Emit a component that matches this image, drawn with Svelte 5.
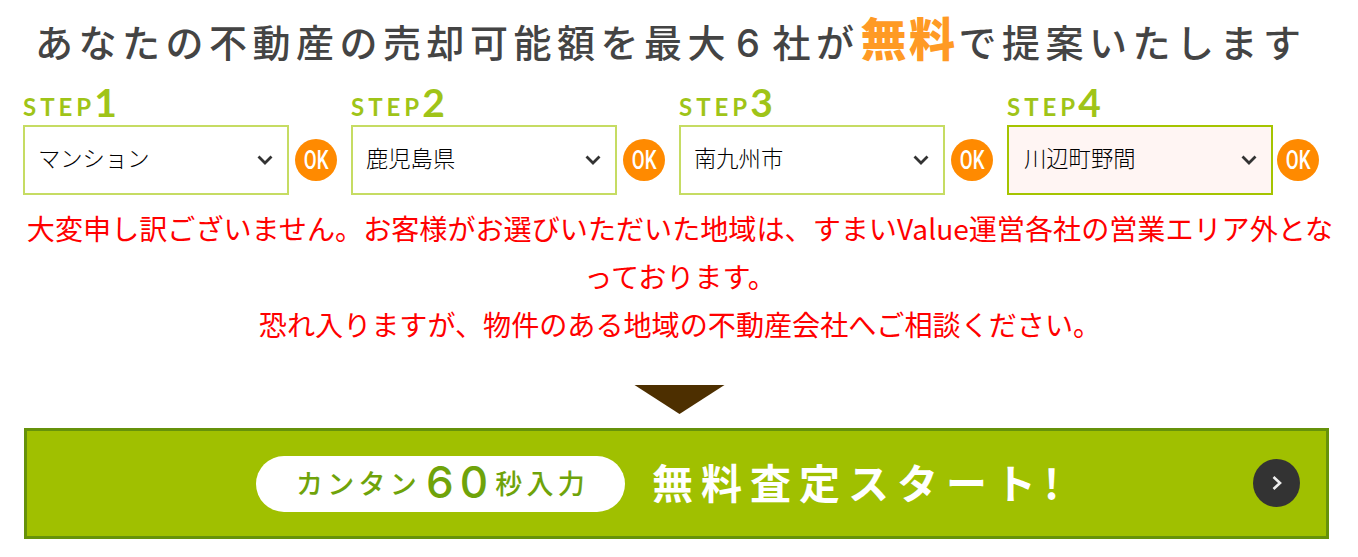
<script>
  const steps = [
    { n: 1, value: 'マンション', active: false },
    { n: 2, value: '鹿児島県', active: false },
    { n: 3, value: '南九州市', active: false },
    { n: 4, value: '川辺町野間', active: true }
  ];
</script>

<main class="page">
  <h1 class="title">
    <span>あなたの不動産の売却可能額を最大<span class="digit">6</span>社が</span><em>無料</em><span>で提案いたします</span>
  </h1>

  <div class="steps">
    {#each steps as s}
      <div class="step">
        <div class="label"><span class="word">STEP</span><span class="num">{s.n}</span></div>
        <div class="row" class:tight={s.active}>
          <div class="selectwrap">
            <select class:active={s.active}>
              <option>{s.value}</option>
            </select>
            <svg class="chev" viewBox="0 0 16 10" width="16" height="10" aria-hidden="true">
              <path d="M1.5 1.5 8 8l6.500-6.500" fill="none" stroke="#333" stroke-width="2.800" />
            </svg>
          </div>
          <div class="ok"><span>OK</span></div>
        </div>
      </div>
    {/each}
  </div>

  <p class="error">
    大変申し訳ございません。お客様がお選びいただいた地域は、すまいValue運営各社の営業エリア外となっております。<br />恐れ入りますが、物件のある地域の不動産会社へご相談ください。
  </p>

  <div class="arrow"></div>

  <button class="cta" type="button">
    <span class="pill">カンタン<b>60</b>秒入力</span>
    <span class="start">無料査定スタート!</span>
    <span class="go">
      <svg viewBox="0 0 12 16" width="12" height="16" aria-hidden="true">
        <path d="M2.500 2 9 8l-6.500 6" fill="none" stroke="#eee" stroke-width="2.600" />
      </svg>
    </span>
  </button>
</main>

<style>
  :global(body) {
    margin: 0;
    background: #fff;
  }
  .page {
    width: 1358px;
    height: 557px;
    overflow: hidden;
    box-sizing: border-box;
    font-family: "Noto Sans CJK JP", "Noto Sans", sans-serif;
  }
  .title {
    margin: 0;
    height: 88px;
    padding: 0 0 8px 35px;
    display: flex;
    align-items: center;
    font-size: 38px;
    font-weight: 500;
    letter-spacing: 5.500px;
    color: #444;
    white-space: nowrap;
    box-sizing: border-box;
  }
  .digit {
    font-family: Inter, Roboto, sans-serif;
    margin: 0 7px 0 5px;
  }
  .title em {
    font-style: normal;
    font-weight: 900;
    font-size: 46px;
    letter-spacing: 2.500px;
    color: #ff9a24;
    margin: -8px 1px 0 1px;
  }
  .steps {
    display: flex;
    padding-left: 23px;
  }
  .step {
    width: 328px;
    flex: none;
  }
  .label {
    height: 37px;
    display: flex;
    align-items: flex-end;
    color: #9fc418;
    font-family: Lato, "Open Sans", sans-serif;
    line-height: 1;
  }
  .word {
    font-size: 24px;
    font-weight: 700;
    letter-spacing: 4px;
    margin-bottom: 6px;
  }
  .num {
    font-size: 39px;
    font-weight: 700;
    margin-left: -1px;
    margin-bottom: 3px;
  }
  .row {
    display: flex;
    align-items: center;
    gap: 6px;
  }
  .row.tight {
    gap: 4px;
  }
  .selectwrap {
    position: relative;
    width: 266px;
    height: 70px;
  }
  select {
    appearance: none;
    width: 100%;
    height: 100%;
    box-sizing: border-box;
    border: 2px solid #c6dc63;
    border-radius: 0;
    background: #fff;
    padding: 0 30px 6px 13px;
    font-family: "Noto Sans CJK JP", sans-serif;
    font-size: 22.300px;
    font-weight: 300;
    color: #000;
    outline: none;
  }
  select.active {
    background: #fff5f3;
    border-color: #a5c400;
    padding-left: 15px;
  }
  .chev {
    position: absolute;
    right: 16px;
    top: 30px;
    pointer-events: none;
  }
  .ok {
    width: 42px;
    height: 42px;
    border-radius: 50%;
    background: #ff8a00;
    color: #fff;
    display: flex;
    align-items: center;
    justify-content: center;
    font-family: Roboto, sans-serif;
    font-weight: 500;
    font-size: 26px;
    line-height: 1;
  }
  .ok span {
    display: inline-block;
    transform: scaleX(0.72);
  }
  .error {
    margin: 9px 0 0;
    padding: 0 23px 0 25px;
    text-align: center;
    color: #f00;
    font-size: 28.100px;
    line-height: 48px;
    line-break: loose;
    font-weight: 400;
  }
  .arrow {
    width: 0;
    height: 0;
    margin: 37px auto 0;
    border-left: 45.500px solid transparent;
    border-right: 45.500px solid transparent;
    border-top: 29px solid #4d2f00;
    transform: translateX(0.500px);
  }
  .cta {
    display: flex;
    align-items: center;
    width: 1305px;
    height: 111px;
    margin: 14px 0 0 24px;
    padding: 0;
    box-sizing: border-box;
    border: 3px solid #66920a;
    background: #a0c000;
    position: relative;
    font-family: "Noto Sans CJK JP", sans-serif;
    color: #fff;
  }
  .pill {
    margin-left: 229px;
    width: 369px;
    height: 56px;
    padding: 0 0 3px 4px;
    box-sizing: border-box;
    border-radius: 28px;
    background: #fff;
    color: #6fa30a;
    display: flex;
    align-items: center;
    justify-content: center;
    font-size: 27px;
    font-weight: 500;
    letter-spacing: 4.300px;
    flex: none;
  }
  .pill b {
    font-family: Inter, Roboto, sans-serif;
    font-size: 44px;
    font-weight: 500;
    letter-spacing: 6px;
    margin: 0 1px 0 5px;
    line-height: 1;
  }
  .start {
    margin: 0 0 6px 27px;
    font-size: 41px;
    font-weight: 700;
    letter-spacing: 8px;
    white-space: nowrap;
  }
  .go {
    position: absolute;
    right: 26px;
    top: 28px;
    width: 47px;
    height: 48px;
    border-radius: 50%;
    background: #333;
    display: flex;
    align-items: center;
    justify-content: center;
  }
</style>
